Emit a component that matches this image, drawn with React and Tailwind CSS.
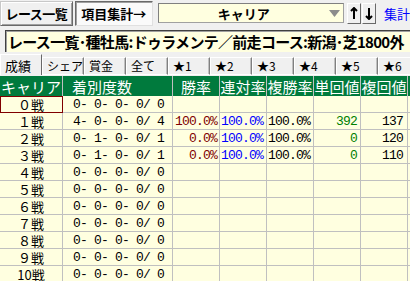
const rows = [
  { c: "０戦", d: "0- 0- 0- 0/ 0" },
  { c: "１戦", d: "4- 0- 0- 0/ 4", win: "100.0%", ren: "100.0%", fuku: "100.0%", tan: "392", fk: "137" },
  { c: "２戦", d: "0- 1- 0- 0/ 1", win: "0.0%", ren: "100.0%", fuku: "100.0%", tan: "0", fk: "120" },
  { c: "３戦", d: "0- 1- 0- 0/ 1", win: "0.0%", ren: "100.0%", fuku: "100.0%", tan: "0", fk: "110" },
  { c: "４戦", d: "0- 0- 0- 0/ 0" },
  { c: "５戦", d: "0- 0- 0- 0/ 0" },
  { c: "６戦", d: "0- 0- 0- 0/ 0" },
  { c: "７戦", d: "0- 0- 0- 0/ 0" },
  { c: "８戦", d: "0- 0- 0- 0/ 0" },
  { c: "９戦", d: "0- 0- 0- 0/ 0" },
  { c: "10戦", d: "0- 0- 0- 0/ 0" },
];

const tabs = ["シェア", "賞金", "全て", "★1", "★2", "★3", "★4", "★5", "★6"];

const cell = "h-full border-r border-b border-[#c0c0c0] flex items-center shrink-0 leading-[13px]";
const num = "font-['Liberation_Mono','Noto_Sans_CJK_JP',monospace] text-[13px] tracking-[-0.8px] whitespace-pre";

export default function App() {
  return (
    <div className="w-[410px] h-[281px] overflow-hidden bg-[#f0f0f0] font-['Noto_Sans_CJK_JP',sans-serif] text-black leading-none select-none">
      {/* toolbar */}
      <div className="h-[29px] flex items-start">
        <button className="mt-[1px] w-[73px] h-[25px] bg-[#f0f0f0] border border-t-[#c8c8c8] border-l-[#c8c8c8] border-r-[#696969] border-b-[#696969] shadow-[inset_1px_1px_0_#fff,inset_-1px_-1px_0_#a0a0a0] text-[13px] tracking-[-0.5px] font-bold">
          レース一覧
        </button>
        <button className="ml-[2px] mt-[1px] w-[78px] h-[25px] bg-[#fafafa] border border-t-[#696969] border-l-[#696969] border-r-[#e0e0e0] border-b-[#e0e0e0] shadow-[inset_1px_1px_0_#a0a0a0] text-[13px] font-bold">
          項目集計→
        </button>
        <div className="ml-[5px] mt-[3px] w-[187px] h-[20px] bg-[#ffffe0] border border-[#a0a0a0] border-t-[#808080] border-l-[#808080] flex items-center">
          <span className="flex-1 text-center text-[13px] font-bold">キャリア</span>
          <svg className="mr-[3px]" width="11" height="7" viewBox="0 0 11 7">
            <path d="M0 0 H11 L5.5 7 Z" fill="#8c8c8c" />
          </svg>
        </div>
        <button className="ml-[3px] mt-[3px] w-[14px] h-[21px] bg-[#f0f0f0] border border-t-white border-l-white border-r-[#696969] border-b-[#696969] flex items-center justify-center">
          <svg width="8" height="13" viewBox="0 0 8 13">
            <path d="M4 1 V12 M1 4 L4 1 L7 4" stroke="#000" strokeWidth="2" fill="none" />
          </svg>
        </button>
        <button className="ml-[1px] mt-[3px] w-[14px] h-[21px] bg-[#f0f0f0] border border-t-white border-l-white border-r-[#696969] border-b-[#696969] flex items-center justify-center">
          <svg width="8" height="13" viewBox="0 0 8 13">
            <path d="M4 1 V12 M1 9 L4 12 L7 9" stroke="#000" strokeWidth="2" fill="none" />
          </svg>
        </button>
        <span className="ml-[8px] mt-[7px] text-[13px] text-[#0000ff] whitespace-nowrap">集計</span>
      </div>

      {/* condition box */}
      <div className="h-[23px] pl-[5px]">
        <div className="mt-[1px] h-[22px] bg-[#ffffe0] border-t border-l border-[#404040] shadow-[inset_1px_1px_0_#a0a0a0] flex items-center pl-[2px] overflow-hidden whitespace-nowrap">
          <span className="text-[15px] tracking-[-0.7px] font-bold">レース一覧･種牡馬:ドゥラメンテ／前走コース:新潟･芝1800外</span>
        </div>
      </div>

      {/* tabs */}
      <div className="h-[22px] flex items-end overflow-hidden">
        <div className="w-[42px] h-[21px] shrink-0 bg-[#f0f0f0] border-t border-l border-white border-r border-r-[#696969] text-[13px] pl-[4px] pt-[4px]">
          成績
        </div>
        {tabs.map((t) => (
          <div
            key={t}
            className="w-[42px] h-[18px] shrink-0 bg-[#f0f0f0] border border-t-white border-l-white border-b-white border-r-[#808080] shadow-[inset_-1px_0_0_#c0c0c0] text-[12px] pl-[4px] pt-[2px] whitespace-nowrap"
          >
            {t}
          </div>
        ))}
      </div>

      {/* grid */}
      <div className="mt-[1px] bg-[#ffffe0]">
        <div className="h-[20px] flex bg-[#007a3d] text-white text-[15px]">
          <div className="w-[63px] h-full border-r border-[#c0c0c0] shrink-0 flex items-center justify-center">キャリア</div>
          <div className="w-[110px] h-full border-r border-[#c0c0c0] shrink-0 flex items-center pl-[9px]">着別度数</div>
          {["勝率", "連対率", "複勝率", "単回値", "複回値"].map((h) => (
            <div key={h} className="w-[47px] h-full border-r border-[#c0c0c0] shrink-0 flex items-center justify-center whitespace-nowrap">
              {h}
            </div>
          ))}
          <div className="flex-1" />
        </div>
        {rows.map((r, i) => (
          <div key={i} className="h-[17px] flex">
            <div className={`${cell} w-[63px] justify-center text-[13px] ${i === 0 ? "outline outline-1 -outline-offset-1 outline-[#800000]" : ""}`}>
              {r.c}
            </div>
            <div className={`${cell} w-[110px] pl-[10px] ${num}`}>{r.d}</div>
            <div className={`${cell} w-[47px] justify-end pr-[2px] ${num} text-[#800000]`}>{r.win}</div>
            <div className={`${cell} w-[47px] justify-end pr-[3px] ${num} text-[#0000ff]`}>{r.ren}</div>
            <div className={`${cell} w-[47px] justify-end pr-[3px] ${num}`}>{r.fuku}</div>
            <div className={`${cell} w-[47px] justify-end pr-[3px] ${num} text-[#008000]`}>{r.tan}</div>
            <div className={`${cell} w-[47px] justify-end pr-[4px] ${num}`}>{r.fk}</div>
            <div className="flex-1 border-b border-[#c0c0c0]" />
          </div>
        ))}
      </div>
    </div>
  );
}
